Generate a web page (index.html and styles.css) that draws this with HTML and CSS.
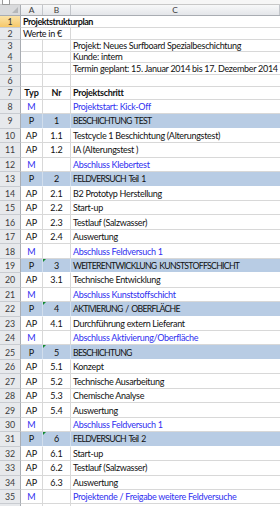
FILE: index.html
```html
<!DOCTYPE html>
<html lang="de">
<head>
<meta charset="utf-8">
<title>Projektstrukturplan</title>
<link rel="stylesheet" href="styles.css">
</head>
<body>
<div class="sheet">
  <div class="topstrip"><span class="tbox"></span></div>
  <div class="row colhead">
    <div class="corner"></div>
    <div class="ch">A</div>
    <div class="ch">B</div>
    <div class="ch">C</div>
  </div>

  <div class="row small"><div class="rh sel">1</div><div class="c span3 bold title">Projektstrukturplan</div></div>
  <div class="row small"><div class="rh">2</div><div class="c span2">Werte in €</div><div class="c"></div></div>
  <div class="row small"><div class="rh">3</div><div class="c"></div><div class="c"></div><div class="c t">Projekt: Neues Surfboard Spezialbeschichtung</div></div>
  <div class="row small"><div class="rh">4</div><div class="c"></div><div class="c"></div><div class="c t">Kunde: intern</div></div>
  <div class="row small"><div class="rh">5</div><div class="c"></div><div class="c"></div><div class="c t">Termin geplant: 15. Januar 2014 bis 17. Dezember 2014</div></div>
  <div class="row small"><div class="rh">6</div><div class="c"></div><div class="c"></div><div class="c"></div></div>
  <div class="row r7"><div class="rh">7</div><div class="c m bold">Typ</div><div class="c m bold">Nr</div><div class="c t bold">Projektschritt</div></div>

  <div class="row ms"><div class="rh">8</div><div class="c m">M</div><div class="c m"></div><div class="c t">Projektstart: Kick-Off</div></div>
  <div class="row ph"><div class="rh">9</div><div class="c m">P</div><div class="c m">1</div><div class="c t">BESCHICHTUNG TEST</div></div>
  <div class="row"><div class="rh">10</div><div class="c m">AP</div><div class="c m">1.1</div><div class="c t">Testcycle 1 Beschichtung (Alterungstest)</div></div>
  <div class="row"><div class="rh">11</div><div class="c m">AP</div><div class="c m">1.2</div><div class="c t">IA (Alterungstest )</div></div>
  <div class="row ms"><div class="rh">12</div><div class="c m">M</div><div class="c m"></div><div class="c t">Abschluss Klebertest</div></div>
  <div class="row ph"><div class="rh">13</div><div class="c m">P</div><div class="c m">2</div><div class="c t">FELDVERSUCH Teil 1</div></div>
  <div class="row"><div class="rh">14</div><div class="c m">AP</div><div class="c m">2.1</div><div class="c t">B2 Prototyp Herstellung</div></div>
  <div class="row"><div class="rh">15</div><div class="c m">AP</div><div class="c m">2.2</div><div class="c t">Start-up</div></div>
  <div class="row"><div class="rh">16</div><div class="c m">AP</div><div class="c m">2.3</div><div class="c t">Testlauf (Salzwasser)</div></div>
  <div class="row"><div class="rh">17</div><div class="c m">AP</div><div class="c m">2.4</div><div class="c t">Auswertung</div></div>
  <div class="row ms"><div class="rh">18</div><div class="c m">M</div><div class="c m"></div><div class="c t">Abschluss Feldversuch 1</div></div>
  <div class="row ph"><div class="rh">19</div><div class="c m">P</div><div class="c m flag">3</div><div class="c t">WEITERENTWICKLUNG KUNSTSTOFFSCHICHT</div></div>
  <div class="row"><div class="rh">20</div><div class="c m">AP</div><div class="c m">3.1</div><div class="c t">Technische Entwicklung</div></div>
  <div class="row ms"><div class="rh">21</div><div class="c m">M</div><div class="c m"></div><div class="c t">Abschluss Kunststoffschicht</div></div>
  <div class="row ph"><div class="rh">22</div><div class="c m">P</div><div class="c m flag">4</div><div class="c t">AKTIVIERUNG / OBERFLÄCHE</div></div>
  <div class="row"><div class="rh">23</div><div class="c m">AP</div><div class="c m">4.1</div><div class="c t">Durchführung extern Lieferant</div></div>
  <div class="row ms"><div class="rh">24</div><div class="c m">M</div><div class="c m"></div><div class="c t">Abschluss Aktivierung/Oberfläche</div></div>
  <div class="row ph"><div class="rh">25</div><div class="c m">P</div><div class="c m flag">5</div><div class="c t">BESCHICHTUNG</div></div>
  <div class="row"><div class="rh">26</div><div class="c m">AP</div><div class="c m">5.1</div><div class="c t">Konzept</div></div>
  <div class="row"><div class="rh">27</div><div class="c m">AP</div><div class="c m">5.2</div><div class="c t">Technische Ausarbeitung</div></div>
  <div class="row"><div class="rh">28</div><div class="c m">AP</div><div class="c m">5.3</div><div class="c t">Chemische Analyse</div></div>
  <div class="row"><div class="rh">29</div><div class="c m">AP</div><div class="c m">5.4</div><div class="c t">Auswertung</div></div>
  <div class="row ms"><div class="rh">30</div><div class="c m">M</div><div class="c m"></div><div class="c t">Abschluss Feldversuch 1</div></div>
  <div class="row ph"><div class="rh">31</div><div class="c m">P</div><div class="c m flag">6</div><div class="c t">FELDVERSUCH Teil 2</div></div>
  <div class="row"><div class="rh">32</div><div class="c m">AP</div><div class="c m">6.1</div><div class="c t">Start-up</div></div>
  <div class="row"><div class="rh">33</div><div class="c m">AP</div><div class="c m">6.2</div><div class="c t">Testlauf (Salzwasser)</div></div>
  <div class="row"><div class="rh">34</div><div class="c m">AP</div><div class="c m">6.3</div><div class="c t">Auswertung</div></div>
  <div class="row ms"><div class="rh">35</div><div class="c m">M</div><div class="c m"></div><div class="c t">Projektende / Freigabe weitere Feldversuche</div></div>
  <div class="row"><div class="rh"></div><div class="c m"></div><div class="c m"></div><div class="c t"></div></div>
</div>
</body>
</html>
```

FILE: styles.css
```css
html, body {
  margin: 0;
  padding: 0;
  background: #ffffff;
  overflow: hidden;
}
body {
  font-family: "Lato", "Liberation Sans", sans-serif;
  font-size: 9px;
  letter-spacing: -0.3px;
  color: #111111;
}
.sheet {
  width: 280px;
  height: 506px;
  overflow: hidden;
}
.topstrip {
  height: 5px;
  border-bottom: 1px solid #c8c8c8;
  box-sizing: border-box;
  position: relative;
  background: #f6f6f6;
}
.tbox {
  position: absolute;
  left: 2px;
  top: -3px;
  width: 6px;
  height: 6px;
  border: 1px solid #9a9a9a;
  background: #fff;
}
.row {
  display: grid;
  grid-template-columns: 21px 22px 28px 1fr;
  height: 14.46px;
}
.row.small { height: 11.8px; }
.row.r7 { height: 13px; }
.colhead {
  height: 11px;
  background: linear-gradient(#f7f8f9, #e4e6ea);
  border-bottom: 1px solid #a9adb3;
  box-sizing: border-box;
}
.corner {
  background: #d9dadc;
  border-right: 1px solid #a9adb3;
  position: relative;
}
.corner::after {
  content: "";
  position: absolute;
  right: 2px;
  bottom: 2px;
  border-left: 6px solid transparent;
  border-bottom: 6px solid #b5b7ba;
}
.ch {
  display: flex;
  align-items: center;
  justify-content: center;
  color: #3c3c3c;
  font-size: 8.4px;
  letter-spacing: 0;
  border-right: 1px solid #c3c6cb;
}
.rh {
  display: flex;
  align-items: center;
  justify-content: center;
  background: #e7e9ec;
  color: #3c3c3c;
  font-size: 8.8px;
  letter-spacing: 0;
  border-right: 1px solid #a9adb3;
  border-bottom: 1px solid #c9ccd1;
  box-sizing: border-box;
}
.rh.sel {
  background: linear-gradient(#fbe3a8, #f6c86a);
  color: #333;
}
.c {
  display: flex;
  align-items: center;
  white-space: nowrap;
  overflow: hidden;
  border-right: 1px solid #d8d8d8;
  border-bottom: 1px solid #d8d8d8;
  box-sizing: border-box;
  position: relative;
}
.c:last-child { border-right: none; }
.span3 { grid-column: 2 / 5; padding-left: 2px; }
.span2 { grid-column: 2 / 4; padding-left: 2px; }
.title { letter-spacing: -0.45px; }
.c.t { padding-left: 2px; }
.c.m { justify-content: center; letter-spacing: 0; }
.bold { font-weight: bold; }
.ms .c { color: #2f2ff0; }
.ph .c {
  background: #b8cce4;
  border-bottom-color: #ffffff;
  border-right-color: #d2deec;
}
.ph .c.t {
  font-size: 8.7px;
  letter-spacing: -0.7px;
  word-spacing: 1.2px;
}
.flag::before {
  content: "";
  position: absolute;
  left: 0;
  top: 0;
  border-top: 3px solid #138a32;
  border-right: 3px solid transparent;
}
```
